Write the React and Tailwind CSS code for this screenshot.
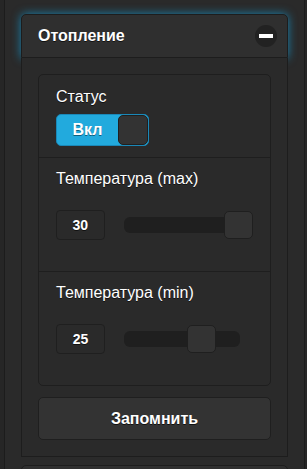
import React, { useState } from 'react';

const font = { fontFamily: '"Liberation Sans", Arial, sans-serif' };

function SliderRow({ label, value, pct, trackW }) {
    return (
        <div className="px-[17px] pt-[11px] pb-[31px]">
            <div className="text-[16px] leading-[20px] text-white [text-shadow:0_1px_0_#111]">{label}</div>
            <div className="mt-[21px] flex items-center">
                <div className="flex h-[30px] w-[49px] items-center justify-center rounded-[4px] border border-[#1f1f1f] bg-[#2a2a2a] text-[14px] font-bold text-white [text-shadow:0_1px_0_#111]">
                    {value}
                </div>
                <div className="relative ml-[19px] h-[16px] rounded-[6px] bg-[#1f1f1f]" style={{ width: trackW }}>
                    <div
                        className="absolute top-[-6px] h-[28px] w-[29px] rounded-[5px] border border-[#1f1f1f] bg-[#333]"
                        style={{ left: `calc(${pct * 100}% - ${pct * 29}px)` }}
                    />
                </div>
            </div>
        </div>
    );
}

export default function App() {
    const [on, setOn] = useState(true);

    return (
        <div className="h-[469px] overflow-hidden bg-[#262626]" style={font}>
            <div className="ml-[4px] h-[469px] w-[301px] border-x border-[#1c1c1c] bg-[#2a2a2a] px-[16px] pt-[14px]">
                {/* Header */}
                <div className="flex h-[44px] items-center justify-between rounded-t-[5px] border border-[#1d1d1d] bg-[#2f2f2f] pl-[16px] pr-[10px] shadow-[0_0_10px_rgba(20,160,220,0.75)]">
                    <span className="text-[16px] font-bold text-white [text-shadow:0_1px_0_#111]">Отопление</span>
                    <span className="flex h-[22px] w-[22px] items-center justify-center rounded-full bg-[#222]">
                        <span className="block h-[4px] w-[14px] bg-white" />
                    </span>
                </div>

                {/* Content */}
                <div className="border-x border-b border-[#1d1d1d] bg-[#2a2a2a] px-[16px] pt-[16px] pb-[16px]">
                    <div className="rounded-[5px] border border-[#1e1e1e] bg-[#2a2a2a]">
                        <div className="border-b border-[#1e1e1e] px-[17px] pt-[12px] pb-[11px]">
                            <div className="text-[16px] leading-[20px] text-white [text-shadow:0_1px_0_#111]">Статус</div>
                            <button
                                onClick={() => setOn(!on)}
                                className="mt-[7px] flex h-[32px] w-[93px] items-center rounded-[5px] border border-[#1a88b8] bg-[#22aadd] p-0"
                            >
                                <span className="flex-1 text-center text-[16px] font-bold text-white [text-shadow:0_1px_0_#0e5f80]">
                                    Вкл
                                </span>
                                <span className="h-[30px] w-[30px] rounded-[5px] border border-[#1f1f1f] bg-[#333]" />
                            </button>
                        </div>
                        <div className="border-b border-[#1e1e1e]">
                            <SliderRow label="Температура (max)" value={30} pct={1} trackW={130} />
                        </div>
                        <SliderRow label="Температура (min)" value={25} pct={0.72} trackW={116} />
                    </div>

                    <button className="mt-[11px] flex h-[43px] w-full items-center justify-center rounded-[5px] border border-[#1f1f1f] bg-[#333] text-[16px] font-bold text-white [text-shadow:0_1px_0_#111]">
                        Запомнить
                    </button>
                </div>

                {/* Next collapsible (partially visible) */}
                <div className="mt-[8px] h-[44px] rounded-t-[5px] border border-[#1d1d1d] bg-[#2f2f2f]" />
            </div>
        </div>
    );
}
